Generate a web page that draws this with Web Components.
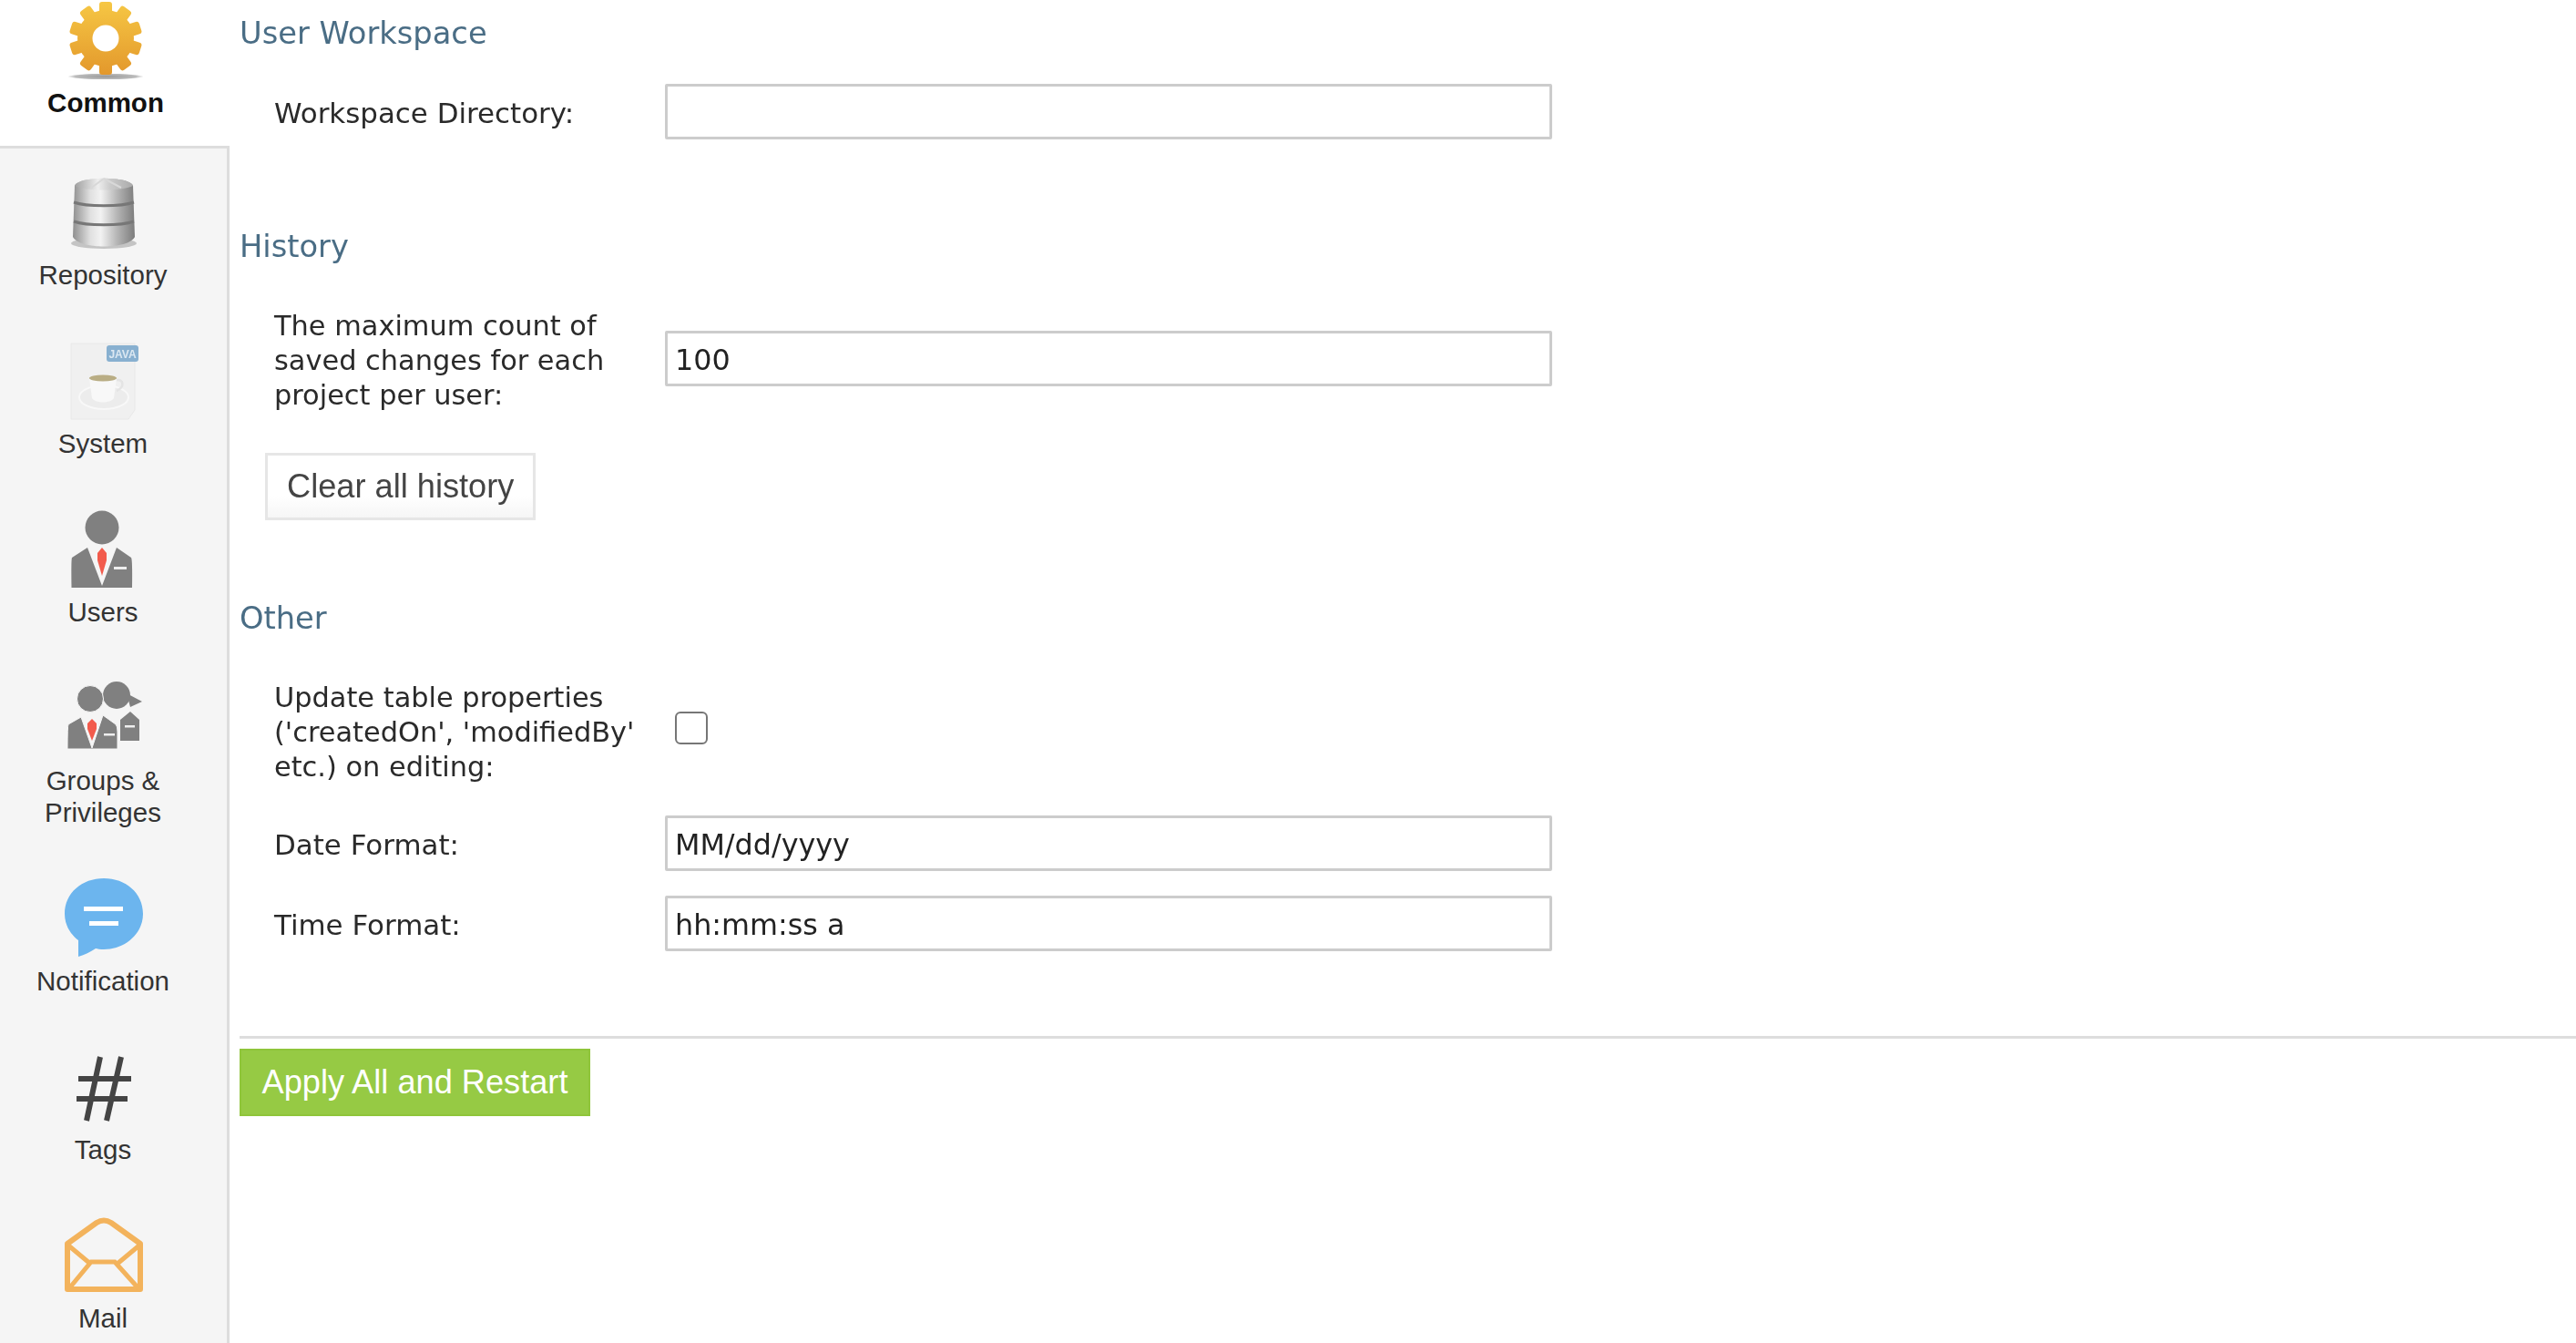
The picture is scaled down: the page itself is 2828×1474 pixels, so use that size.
<!DOCTYPE html>
<html lang="en">
<head>
<meta charset="utf-8">
<title>Settings</title>
<style>
  html, body { margin: 0; height: 100%; overflow: hidden; background: #fff; }
  svg.ico { display: block; width: 100px; height: 84px; filter: blur(.4px); overflow: visible; }
</style>
</head>
<body>
<app-shell>
  <side-nav slot="nav">
    <nav-item active>
      <svg class="ico" slot="icon" viewBox="0 0 100 84" aria-hidden="true">
        <defs>
          <linearGradient id="gold" gradientUnits="userSpaceOnUse" x1="0" y1="0" x2="0" y2="80"><stop offset="0" stop-color="#f6c744"/><stop offset="1" stop-color="#e3982c"/></linearGradient>
          <radialGradient id="gearShadow"><stop offset="0" stop-color="#999"/><stop offset=".8" stop-color="#bbb"/><stop offset="1" stop-color="#fff"/></radialGradient>
          <rect id="tooth" x="43" y="0" width="14" height="22" rx="3" fill="#fff"/>
          <mask id="gearShape" maskUnits="userSpaceOnUse" x="0" y="-4" width="100" height="90">
            <circle cx="50" cy="40" r="31" fill="#fff"/>
            <use href="#tooth" transform="rotate(0 50 40)"/>
            <use href="#tooth" transform="rotate(36 50 40)"/>
            <use href="#tooth" transform="rotate(72 50 40)"/>
            <use href="#tooth" transform="rotate(108 50 40)"/>
            <use href="#tooth" transform="rotate(144 50 40)"/>
            <use href="#tooth" transform="rotate(180 50 40)"/>
            <use href="#tooth" transform="rotate(216 50 40)"/>
            <use href="#tooth" transform="rotate(252 50 40)"/>
            <use href="#tooth" transform="rotate(288 50 40)"/>
            <use href="#tooth" transform="rotate(324 50 40)"/>
            <circle cx="50" cy="40" r="14.500" fill="#000"/>
          </mask>
        </defs>
        <ellipse cx="50" cy="82" rx="42" ry="3.500" fill="url(#gearShadow)"/>
        <rect x="0" y="-4" width="100" height="90" fill="url(#gold)" mask="url(#gearShape)"/>
      </svg>
      Common
    </nav-item>
    <nav-item>
      <svg class="ico" slot="icon" viewBox="0 0 100 84" aria-hidden="true">
        <defs>
          <linearGradient id="metal" x1="0" x2="1" y1="0" y2="0"><stop offset="0" stop-color="#8f8f8f"/><stop offset=".28" stop-color="#e0e0e0"/><stop offset=".45" stop-color="#f2f2f2"/><stop offset=".72" stop-color="#b4b4b4"/><stop offset="1" stop-color="#7c7c7c"/></linearGradient>
          <linearGradient id="metalTop" x1="0" x2="1" y1="0" y2="0"><stop offset="0" stop-color="#a0a0a0"/><stop offset=".4" stop-color="#eee"/><stop offset=".6" stop-color="#ccc"/><stop offset="1" stop-color="#aaa"/></linearGradient>
        </defs>
        <ellipse cx="51" cy="77" rx="36" ry="6" fill="#9a9a9a" opacity=".55"/>
        <path d="M19 14 C22 3 80 3 83 14 L85 70 C78 84 24 84 17 70z" fill="url(#metal)"/>
        <path d="M19 14 C22 3 80 3 83 14 C70 20 32 20 19 14z" fill="url(#metalTop)"/>
        <path d="M51 6 L36 17 M51 6 L70 16" stroke="#d8d8d8" stroke-width="2" fill="none"/>
        <path d="M18 32 C32 37 70 37 84 32" fill="none" stroke="#777" stroke-width="3"/>
        <path d="M18 53 C32 58 70 58 84 53" fill="none" stroke="#777" stroke-width="3"/>
      </svg>
      Repository
    </nav-item>
    <nav-item>
      <svg class="ico" slot="icon" viewBox="0 0 100 84" aria-hidden="true">
        <path d="M15 2 H85 V75 L78 85 H15z" fill="#f0f0f0" stroke="#e8e8e8"/>
        <ellipse cx="51" cy="61" rx="27" ry="13" fill="#ececec" stroke="#f8f8f8" stroke-width="2"/>
        <path d="M35 40 H65 L62 62 C58 68 42 68 38 62z" fill="#f8f8f8"/>
        <path d="M65 42 c8-1 9 8 0 12" fill="none" stroke="#e4e4e4" stroke-width="2.500"/>
        <ellipse cx="50" cy="40" rx="15" ry="3.500" fill="#b9ad84"/>
        <rect x="54" y="4" width="35" height="18" rx="3" fill="#88b0d0"/>
        <text x="71.500" y="17.500" text-anchor="middle" font-family="'Liberation Sans',sans-serif" font-size="12" font-weight="700" fill="#dce8f2">JAVA</text>
      </svg>
      System
    </nav-item>
    <nav-item>
      <svg class="ico" slot="icon" viewBox="0 0 100 84" aria-hidden="true">
        <circle cx="49" cy="19" r="18.500" fill="#808080"/>
        <path d="M33 41 L16 52 Q15 54 15.500 85 H82 Q82.500 54 81 52 L65 41 L49 83z" fill="#808080"/>
        <path d="M37 40 H61 L49 80z" fill="#f5f5f5"/>
        <path d="M44 47 L49 41 L54 47 L54 55 L49 72 L44 55z" fill="#f25b4c"/>
        <rect x="62" y="62" width="14" height="3" fill="#eee"/>
      </svg>
      Users
    </nav-item>
    <nav-item>
      <svg class="ico" slot="icon" viewBox="0 0 100 84" aria-hidden="true">
        <circle cx="65" cy="18" r="15" fill="#808080"/>
        <path d="M76 16 L93 25 L80 31z" fill="#808080"/>
        <path d="M80 36 L69 45 V68 H90 V45z" fill="#808080"/>
        <rect x="74" y="51" width="11" height="2.500" fill="#eee"/>
        <circle cx="36" cy="22" r="14.500" fill="#808080" stroke="#f5f5f5" stroke-width="1"/>
        <path d="M26 42 L12 50 Q11 52 11 77 H66 V58 Q66 52 64 50 L50 40 L38 76z" fill="#808080" stroke="#f5f5f5" stroke-width="1"/>
        <path d="M28 42 H48 L38 74z" fill="#f5f5f5"/>
        <path d="M33 49 L38 44 L43 49 L43 55 L38 68 L33 55z" fill="#f25b4c"/>
        <rect x="51" y="60" width="12" height="2.500" fill="#eee"/>
      </svg>
      Groups &amp;<br>Privileges
    </nav-item>
    <nav-item>
      <svg class="ico" slot="icon" viewBox="0 0 100 84" aria-hidden="true">
        <path d="M51 -1 C75 -1 94 15 94 38 C94 60 74 77 51 77 C47 77 44 76.500 42 76 C36 80 30 83 23 85 L23 67 C14 60 8 50 8 38 C8 15 27 -1 51 -1z" fill="#6cb5ee"/>
        <rect x="29" y="30" width="43" height="5" fill="#fff"/>
        <rect x="35" y="46" width="32" height="5" fill="#fff"/>
      </svg>
      Notification
    </nav-item>
    <nav-item>
      <svg class="ico" slot="icon" viewBox="0 0 100 84" aria-hidden="true">
        <path d="M23 34 H81 M21 56 H77 M47 10 L32 80 M70 10 L54 80" fill="none" stroke="#444" stroke-width="6"/>
      </svg>
      Tags
    </nav-item>
    <nav-item>
      <svg class="ico" slot="icon" viewBox="0 0 100 84" aria-hidden="true">
        <path d="M11 30 L43 7 Q51 2 59 7 L91 30 V80 H11z" fill="none" stroke="#f3b35c" stroke-width="6" stroke-linejoin="round"/>
        <path d="M11 31 L35 51 M91 31 L67 51 M13 79 L37 50 H63 L89 79" fill="none" stroke="#f3b35c" stroke-width="5"/>
      </svg>
      Mail
    </nav-item>
  </side-nav>

  <settings-section heading="User Workspace">
    <form-row label="Workspace Directory:"><text-field></text-field></form-row>
  </settings-section>

  <settings-section heading="History" style="margin-top:94px">
    <form-row nudge style="--label-pad:2px"><span slot="text">The maximum count of<br>saved changes for each<br>project per user:</span><text-field>100</text-field></form-row>
    <action-button style="margin:44px 0 0 28px">Clear all history</action-button>
  </settings-section>

  <settings-section heading="Other" style="margin-top:84px">
    <form-row nudge style="--field-lift:10px"><span slot="text">Update table properties<br>('createdOn', 'modifiedBy'<br>etc.) on editing:</span><check-field></check-field></form-row>
    <form-row label="Date Format:" style="margin-top:34px"><text-field>MM/dd/yyyy</text-field></form-row>
    <form-row label="Time Format:" style="margin-top:27px"><text-field>hh:mm:ss a</text-field></form-row>
  </settings-section>

  <apply-bar><action-button primary>Apply All and Restart</action-button></apply-bar>
</app-shell>

<script>
function define(name, css, html, extra) {
  customElements.define(name, class extends HTMLElement {
    constructor() {
      super();
      const root = this.attachShadow({ mode: 'open' });
      root.innerHTML = '<style>' + css + '</style>' + html;
    }
    connectedCallback() { if (extra) extra(this); }
  });
}

define('app-shell',
  `:host{display:grid;grid-template-columns:252px 1fr;height:100vh;overflow:hidden;filter:blur(.4px);}
   main{padding:13px 0 0 11px;min-width:0;}`,
  `<slot name="nav"></slot><main><slot></slot></main>`);

define('side-nav',
  `:host{display:flex;flex-direction:column;overflow:hidden;background:#f5f5f5;height:100vh;}`,
  `<slot></slot>`);

define('nav-item',
  `:host{display:flex;flex:none;flex-direction:column;align-items:center;box-sizing:border-box;width:252px;
     padding:27px 23px 29px 0;gap:10px;border-right:3px solid #ddd;text-align:center;
     font:29.5px/35px "Liberation Sans",Arial,sans-serif;color:#333;}
   :host([active]){padding:2px 20px 30px 0;gap:9px;border-right:0;border-bottom:3px solid #ddd;background:#fff;color:#111;font-weight:700;}
   .icon{display:block;height:84px;}`,
  `<slot class="icon" name="icon"></slot><div><slot></slot></div>`);

define('settings-section',
  `:host{display:block;}
   h2{margin:0;padding-top:2px;font:400 33.700px/44px "DejaVu Sans",Verdana,sans-serif;color:#4a6d85;}
   .body{margin-top:33px;}`,
  `<h2></h2><div class="body"><slot></slot></div>`,
  el => {
    const h = el.getAttribute('heading');
    el.shadowRoot.querySelector('h2').textContent = h;
    el.shadowRoot.querySelector('.body').style.marginTop =
      h === 'User Workspace' ? '33px' : h === 'Other' ? '46px' : '44px';
  });

define('form-row',
  `:host{display:grid;grid-template-columns:429px 974px;align-items:center;padding-left:38px;}
   .label{font:30.400px/38px "DejaVu Sans",Verdana,sans-serif;color:#2a2a2a;padding-top:var(--label-pad,0);}
   :host([label]) .label{font-size:30.900px;padding-top:2px;}
   :host([nudge]) .field{margin-bottom:var(--field-lift,3px);}
   .field{display:block;}`,
  `<div class="label"><slot name="text"></slot></div><div class="field"><slot></slot></div>`,
  el => {
    if (el.hasAttribute('label')) el.shadowRoot.querySelector('.label').textContent = el.getAttribute('label');
  });

define('text-field',
  `:host{display:block;}
   .box{box-sizing:border-box;height:61px;width:974px;border:3px solid #ccc;border-radius:2px;background:#fff;padding:0 8px;
     font:31.800px/58px "DejaVu Sans",Verdana,sans-serif;color:#222;white-space:nowrap;overflow:hidden;outline:0;}`,
  `<div class="box" role="textbox" contenteditable="true"><slot></slot></div>`);

define('check-field',
  `:host{display:block;padding-left:11px;}
   input{appearance:none;-webkit-appearance:none;display:block;box-sizing:border-box;margin:0;width:36px;height:36px;
     border:2.500px solid #767676;border-radius:6px;background:#fff;}`,
  `<input type="checkbox" aria-label="Update table properties">`);

define('action-button',
  `:host{display:inline-block;}
   button{box-sizing:border-box;height:74px;padding:0 21px;border:3px solid #e6e6e6;border-radius:0;
     background:linear-gradient(#fff 65%,#f6f6f6);color:#444;font:36.200px/1 "Liberation Sans",Arial,sans-serif;cursor:pointer;white-space:nowrap;}
   :host([primary]) button{height:74px;width:385px;padding:0;border:2px solid #8fc53a;background:#96ca44;color:#fff;}`,
  `<button type="button"><slot></slot></button>`);

define('apply-bar',
  `:host{display:block;margin-top:93px;border-top:3px solid #ddd;padding-top:11px;}`,
  `<slot></slot>`);
</script>
</body>
</html>
